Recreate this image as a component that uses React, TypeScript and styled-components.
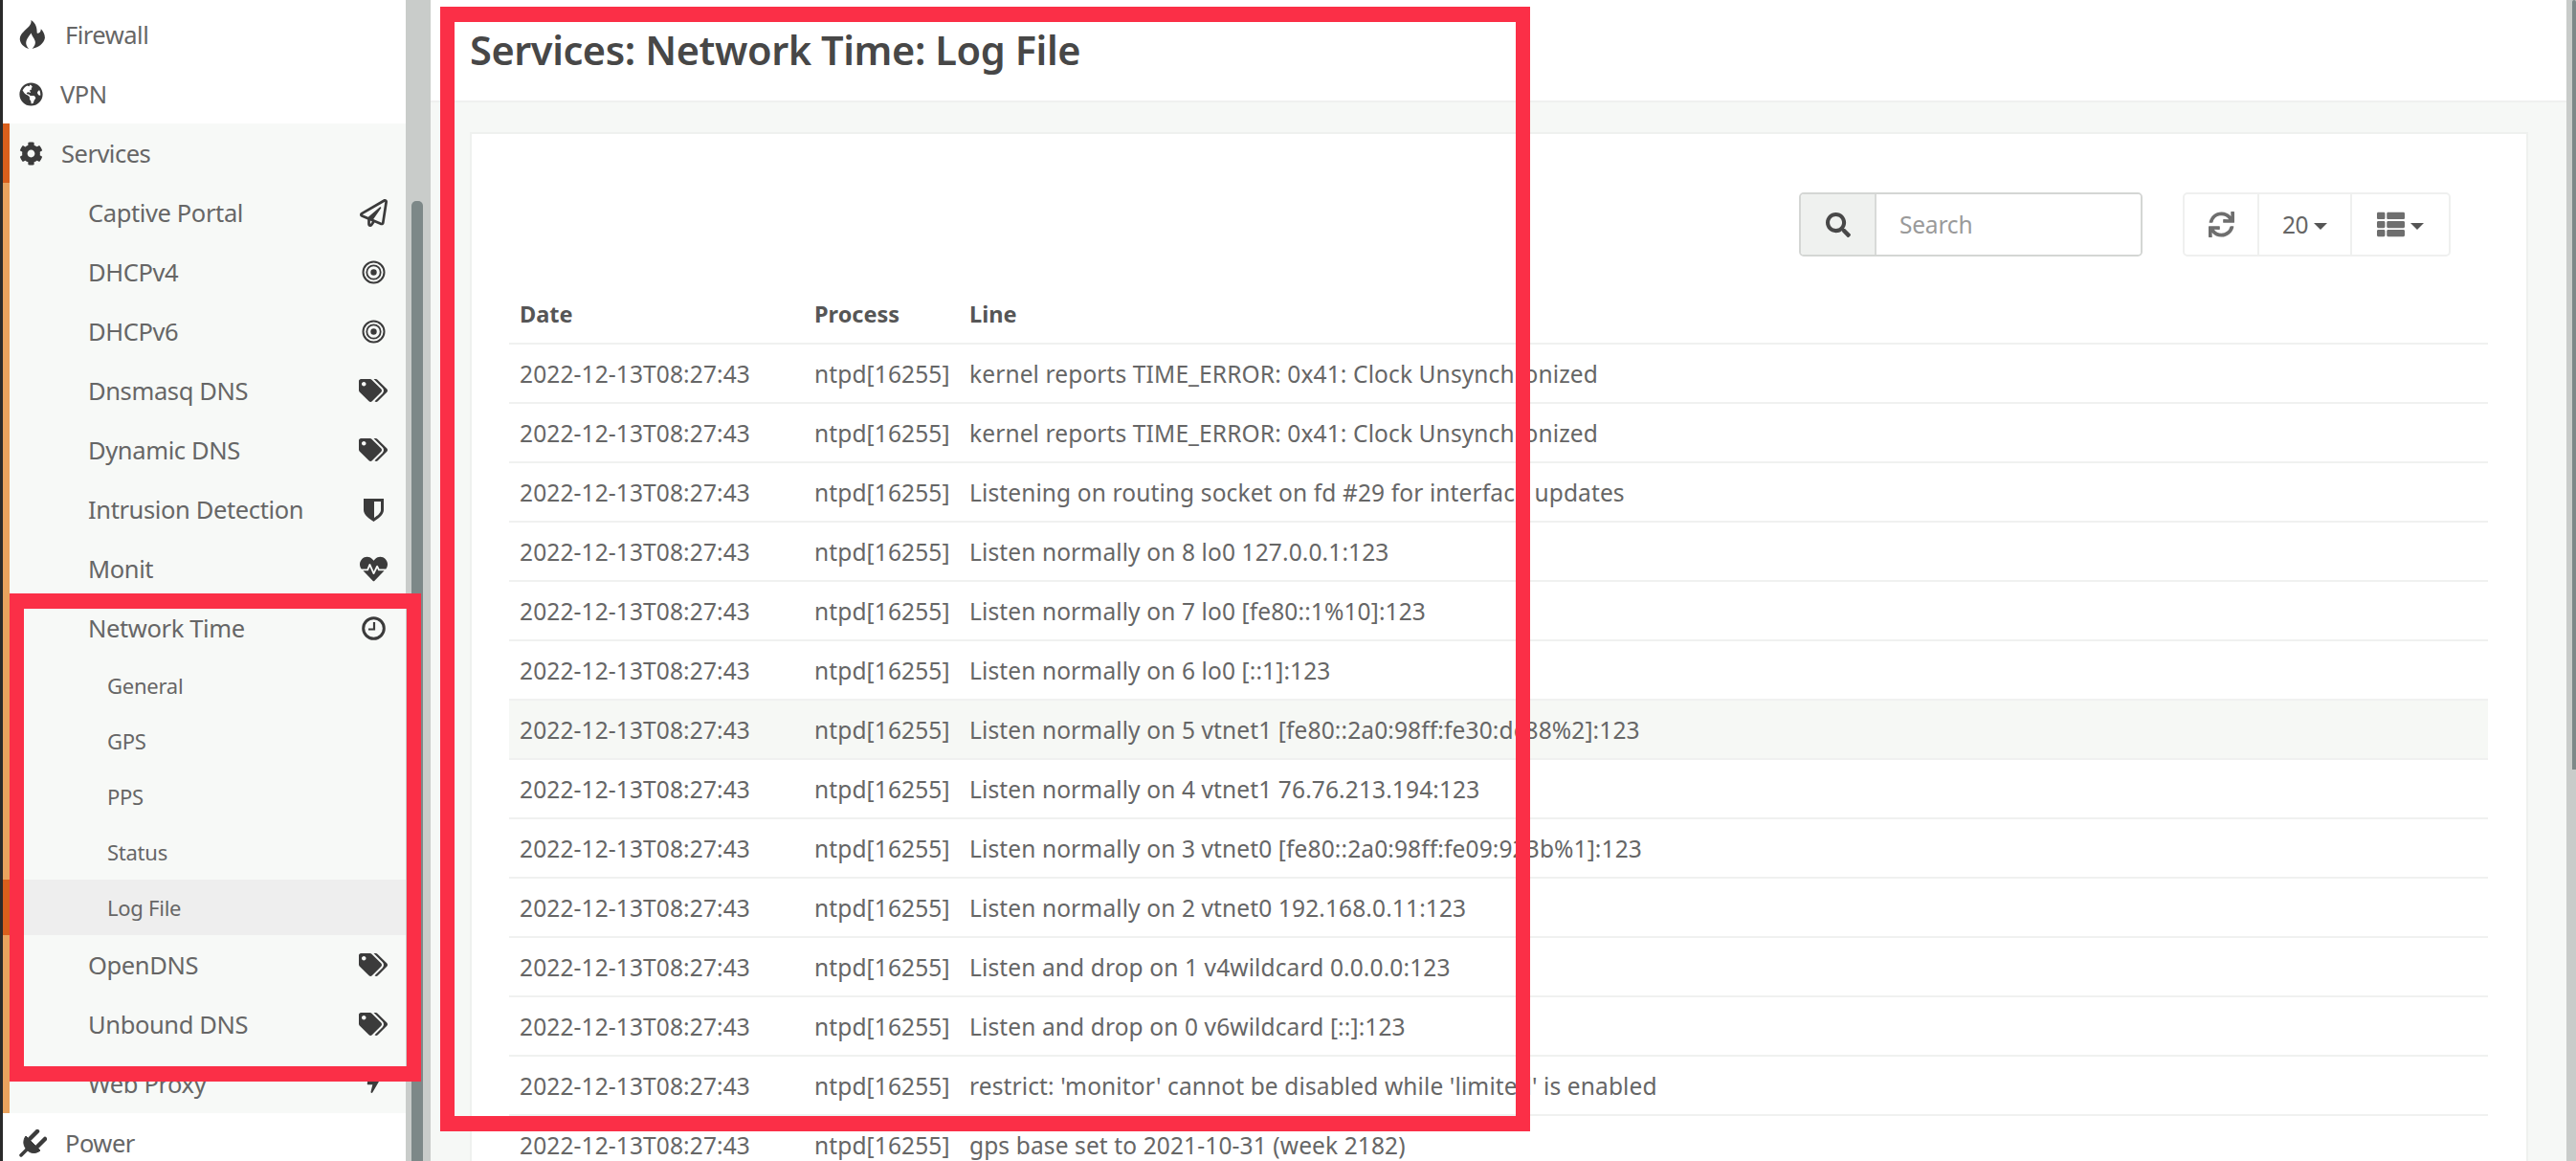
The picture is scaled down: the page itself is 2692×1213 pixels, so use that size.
import React from "react";
import styled, { createGlobalStyle } from "styled-components";
import {
  FaGlobeAmericas, FaCog, FaRegPaperPlane, FaTags,
  FaHeartbeat, FaBolt, FaSearch, FaSync, FaThList,
} from "react-icons/fa";

const Global = createGlobalStyle`
  html, body { margin: 0; padding: 0; height: 100%; overflow: hidden; background: #f6f8f6; }
  body { font-family: "Noto Sans", "Liberation Sans", sans-serif; color: #666; }
  * { box-sizing: border-box; }
`;

const Shell = styled.div`
  position: relative;
  display: flex;
  width: 2692px;
  height: 1213px;
  overflow: hidden;
`;

const Sidebar = styled.aside`
  flex: none;
  width: 424px;
  height: 1213px;
  padding-top: 5px;
  background: #fff;
  border-left: 3px solid #2a2a2a;
  overflow: hidden;
`;

const Group = styled.div`
  background: #f7f9f7;
`;

const Row = styled.div<{ $mark?: "none" | "light" | "dark"; $height?: number; $active?: boolean }>`
  display: flex;
  align-items: center;
  height: ${(p) => p.$height ?? 62}px;
  padding-right: 19px;
  background: ${(p) => (p.$active ? "#eeeeee" : "transparent")};
  border-left: 7px solid
    ${(p) => (p.$mark === "dark" ? "#d95f1c" : p.$mark === "light" ? "#e9a35e" : "transparent")};
`;

const TopIcon = styled.span<{ $width: number }>`
  flex: none;
  display: flex;
  align-items: center;
  width: ${(p) => p.$width}px;
  margin-left: 10px;
  color: #3b3b3b;
`;

const TopLabel = styled.span`
  font-size: 25.5px;
  letter-spacing: -0.5px;
  color: #666;
`;

const SubLabel = styled.span`
  flex: 1;
  padding-left: 82px;
  font-size: 25.5px;
  letter-spacing: -0.38px;
  color: #666;
`;

const LeafLabel = styled.span`
  padding-left: 102px;
  font-size: 22px;
  letter-spacing: -0.25px;
  color: #666;
`;

const SubIcon = styled.span`
  flex: none;
  display: flex;
  justify-content: center;
  align-items: center;
  width: 30px;
  color: #3b3b3b;
`;

const ScrollTrack = styled.div<{ $width: number; $inset: number }>`
  flex: none;
  width: ${(p) => p.$width}px;
  height: 1213px;
  padding-left: ${(p) => p.$inset}px;
  background: #c9ccca;
`;

const ScrollThumb = styled.div<{ $top: number; $bottom: number; $width: number }>`
  width: ${(p) => p.$width}px;
  height: ${(p) => p.$bottom - p.$top}px;
  margin-top: ${(p) => p.$top}px;
  background: #7d8888;
  border-radius: 5px 5px 0 0;
`;

const Main = styled.main`
  flex: none;
  width: 2232px;
  height: 1213px;
  background: #f6f8f6;
  overflow: hidden;
`;

const PageHeader = styled.header`
  height: 107px;
  padding: 24px 0 0 41px;
  background: #fff;
  border-bottom: 2px solid #eff0ef;
`;

const Title = styled.h1`
  margin: 0;
  font-size: 41.5px;
  line-height: 56px;
  font-weight: 600;
  letter-spacing: -0.42px;
  color: #474747;
`;

const Panel = styled.section`
  width: 2151px;
  margin: 31px 0 0 41px;
  padding: 61px 40px 0 39px;
  background: #fff;
  border: 2px solid #eff1ef;
  height: 1200px;
`;

const Toolbar = styled.div`
  display: flex;
  justify-content: flex-end;
  gap: 42px;
  height: 67px;
  padding-right: 39px;
`;

const SearchGroup = styled.div`
  display: flex;
  width: 359px;
  height: 67px;
  border: 2px solid #d4d6d4;
  border-radius: 5px;
  overflow: hidden;
`;

const SearchAddon = styled.div`
  flex: none;
  display: flex;
  align-items: center;
  justify-content: center;
  width: 79px;
  background: #eff1ef;
  border-right: 2px solid #d8dad8;
  color: #484848;
`;

const SearchInput = styled.input`
  flex: 1;
  min-width: 0;
  padding: 0 0 0 24px;
  border: 0;
  outline: 0;
  background: #fff;
  font: 400 24.5px "Noto Sans", sans-serif;
  letter-spacing: -0.2px;
  color: #666;
  &::placeholder { color: #9a9a9a; opacity: 1; }
`;

const ButtonGroup = styled.div`
  display: flex;
  height: 67px;
  border: 2px solid #eff0ef;
  border-radius: 5px;
`;

const ToolButton = styled.div<{ $width: number; $last?: boolean }>`
  display: flex;
  align-items: center;
  justify-content: center;
  gap: 6px;
  width: ${(p) => p.$width}px;
  border-right: ${(p) => (p.$last ? "0" : "2px solid #eff0ef")};
  font-size: 24.5px;
  letter-spacing: -0.4px;
  color: #666;
`;

const Caret = styled.span`
  width: 0;
  height: 0;
  border-left: 7px solid transparent;
  border-right: 7px solid transparent;
  border-top: 7px solid #555;
  margin-top: 3px;
`;

const LogTable = styled.table`
  width: 2068px;
  margin-top: 29px;
  border-collapse: collapse;
  table-layout: fixed;
  font-size: 24.5px;
`;

const HeadCell = styled.th<{ $width?: number }>`
  width: ${(p) => (p.$width ? `${p.$width}px` : "auto")};
  height: 62px;
  padding: 0 11px;
  text-align: left;
  font-weight: 700;
  font-size: 23.5px;
  letter-spacing: 0;
  color: #565656;
  border-bottom: 2px solid #f0f1f0;
`;

const BodyRow = styled.tr<{ $hover?: boolean }>`
  background: ${(p) => (p.$hover ? "#f6f8f5" : "transparent")};
`;

const Cell = styled.td`
  height: 62px;
  padding: 0 11px;
  white-space: nowrap;
  overflow: hidden;
  letter-spacing: 0.12px;
  color: #666;
  border-bottom: 2px solid #f0f1f0;
`;

const Annotation = styled.div<{ $x: number; $y: number; $w: number; $h: number; $tb: number; $lr: number }>`
  position: absolute;
  left: ${(p) => p.$x}px;
  top: ${(p) => p.$y}px;
  width: ${(p) => p.$w}px;
  height: ${(p) => p.$h}px;
  border-style: solid;
  border-color: #fb2f47;
  border-width: ${(p) => p.$tb}px ${(p) => p.$lr}px;
  pointer-events: none;
`;

const FireIcon = () => (
  <svg width="27" height="30" viewBox="0 0 26 29" fill="currentColor">
    <path d="M12 0C13 5 8 8 5 11C2 14 0 17 1 21C2 25 6 28 10 29C7 26 6 23 8 19C9 17 11 15 12 13C13 16 15 18 16 21C17 24 15 27 13 29C19 28 25 24 26 18C26 14 24 11 22 9C22 12 20 14 18 13C18 8 17 3 12 0Z" />
  </svg>
);

const PlugIcon = () => (
  <svg width="29" height="29" viewBox="0 0 29 29" fill="currentColor" stroke="currentColor">
    <path d="M7 7L22 22C17 26 11 25 8 21C4 17 4 11 7 7Z" strokeWidth="1" />
    <path d="M11 10L19 2M19 18L27 10" strokeWidth="4.5" strokeLinecap="round" fill="none" />
    <path d="M2 27L9 20" strokeWidth="3.5" strokeLinecap="round" fill="none" />
  </svg>
);

const RingsIcon = () => (
  <svg width="25" height="25" viewBox="0 0 25 25" fill="none" stroke="currentColor">
    <circle cx="12.5" cy="12.5" r="11" strokeWidth="2" />
    <circle cx="12.5" cy="12.5" r="7.2" strokeWidth="1.8" />
    <circle cx="12.5" cy="12.5" r="3.2" fill="currentColor" stroke="none" />
  </svg>
);

const ClockIcon = () => (
  <svg width="25" height="25" viewBox="0 0 25 25" fill="none" stroke="currentColor">
    <circle cx="12.5" cy="12.5" r="10.8" strokeWidth="3" />
    <path d="M13 6V13.5H7" strokeWidth="2.2" />
  </svg>
);

const ShieldIcon = () => (
  <svg width="21" height="25" viewBox="0 0 21 25" fill="currentColor">
    <path fillRule="evenodd" d="M0 1H21V13C21 18 15 22 10.5 25C6 22 0 18 0 13ZM11 4V21C14 19 18 16 18 13V4Z" />
  </svg>
);

const lines = [
  "kernel reports TIME_ERROR: 0x41: Clock Unsynchronized",
  "kernel reports TIME_ERROR: 0x41: Clock Unsynchronized",
  "Listening on routing socket on fd #29 for interface updates",
  "Listen normally on 8 lo0 127.0.0.1:123",
  "Listen normally on 7 lo0 [fe80::1%10]:123",
  "Listen normally on 6 lo0 [::1]:123",
  "Listen normally on 5 vtnet1 [fe80::2a0:98ff:fe30:dc88%2]:123",
  "Listen normally on 4 vtnet1 76.76.213.194:123",
  "Listen normally on 3 vtnet0 [fe80::2a0:98ff:fe09:923b%1]:123",
  "Listen normally on 2 vtnet0 192.168.0.11:123",
  "Listen and drop on 1 v4wildcard 0.0.0.0:123",
  "Listen and drop on 0 v6wildcard [::]:123",
  "restrict: 'monitor' cannot be disabled while 'limited' is enabled",
  "gps base set to 2021-10-31 (week 2182)",
];

type Sub = { label: string; icon: React.ReactNode };
const before: Sub[] = [
  { label: "Captive Portal", icon: <FaRegPaperPlane size={29} /> },
  { label: "DHCPv4", icon: <RingsIcon /> },
  { label: "DHCPv6", icon: <RingsIcon /> },
  { label: "Dnsmasq DNS", icon: <FaTags size={30} /> },
  { label: "Dynamic DNS", icon: <FaTags size={30} /> },
  { label: "Intrusion Detection", icon: <ShieldIcon /> },
  { label: "Monit", icon: <FaHeartbeat size={29} /> },
  { label: "Network Time", icon: <ClockIcon /> },
];
const after: Sub[] = [
  { label: "OpenDNS", icon: <FaTags size={30} /> },
  { label: "Unbound DNS", icon: <FaTags size={30} /> },
  { label: "Web Proxy", icon: <FaBolt size={20} /> },
];
const leaves = ["General", "GPS", "PPS", "Status", "Log File"];

const SubRow = ({ item }: { item: Sub }) => (
  <Row $mark="light">
    <SubLabel>{item.label}</SubLabel>
    <SubIcon>{item.icon}</SubIcon>
  </Row>
);

export default function App() {
  return (
    <Shell>
      <Global />
      <Sidebar>
        <Row $mark="none">
          <TopIcon $width={48}><FireIcon /></TopIcon>
          <TopLabel>Firewall</TopLabel>
        </Row>
        <Row $mark="none">
          <TopIcon $width={43}><FaGlobeAmericas size={25} /></TopIcon>
          <TopLabel>VPN</TopLabel>
        </Row>
        <Group>
          <Row $mark="dark">
            <TopIcon $width={44}><FaCog size={25} /></TopIcon>
            <TopLabel>Services</TopLabel>
          </Row>
          {before.map((s) => <SubRow key={s.label} item={s} />)}
          {leaves.map((l) => (
            <Row key={l} $height={58} $mark={l === "Log File" ? "dark" : "light"} $active={l === "Log File"}>
              <LeafLabel>{l}</LeafLabel>
            </Row>
          ))}
          {after.map((s) => <SubRow key={s.label} item={s} />)}
        </Group>
        <Row $mark="none">
          <TopIcon $width={48}><PlugIcon /></TopIcon>
          <TopLabel>Power</TopLabel>
        </Row>
      </Sidebar>
      <ScrollTrack $width={26} $inset={6}>
        <ScrollThumb $top={210} $bottom={1213} $width={12} />
      </ScrollTrack>
      <Main>
        <PageHeader>
          <Title>Services: Network Time: Log File</Title>
        </PageHeader>
        <Panel>
          <Toolbar>
            <SearchGroup>
              <SearchAddon><FaSearch size={26} /></SearchAddon>
              <SearchInput placeholder="Search" readOnly />
            </SearchGroup>
            <ButtonGroup>
              <ToolButton $width={78}><FaSync size={27} color="#6e6e6e" /></ToolButton>
              <ToolButton $width={97}>20<Caret /></ToolButton>
              <ToolButton $width={101} $last><FaThList size={29} color="#6e6e6e" /><Caret /></ToolButton>
            </ButtonGroup>
          </Toolbar>
          <LogTable>
            <thead>
              <tr>
                <HeadCell $width={308}>Date</HeadCell>
                <HeadCell $width={162}>Process</HeadCell>
                <HeadCell>Line</HeadCell>
              </tr>
            </thead>
            <tbody>
              {lines.map((line, i) => (
                <BodyRow key={i} $hover={i === 6}>
                  <Cell>2022-12-13T08:27:43</Cell>
                  <Cell>ntpd[16255]</Cell>
                  <Cell>{line}</Cell>
                </BodyRow>
              ))}
            </tbody>
          </LogTable>
        </Panel>
      </Main>
      <ScrollTrack $width={10} $inset={6}>
        <ScrollThumb $top={0} $bottom={804} $width={4} />
      </ScrollTrack>
      <Annotation $x={10} $y={620} $w={430} $h={510} $tb={16} $lr={15} />
      <Annotation $x={460} $y={7} $w={1139} $h={1175} $tb={16} $lr={15} />
    </Shell>
  );
}
